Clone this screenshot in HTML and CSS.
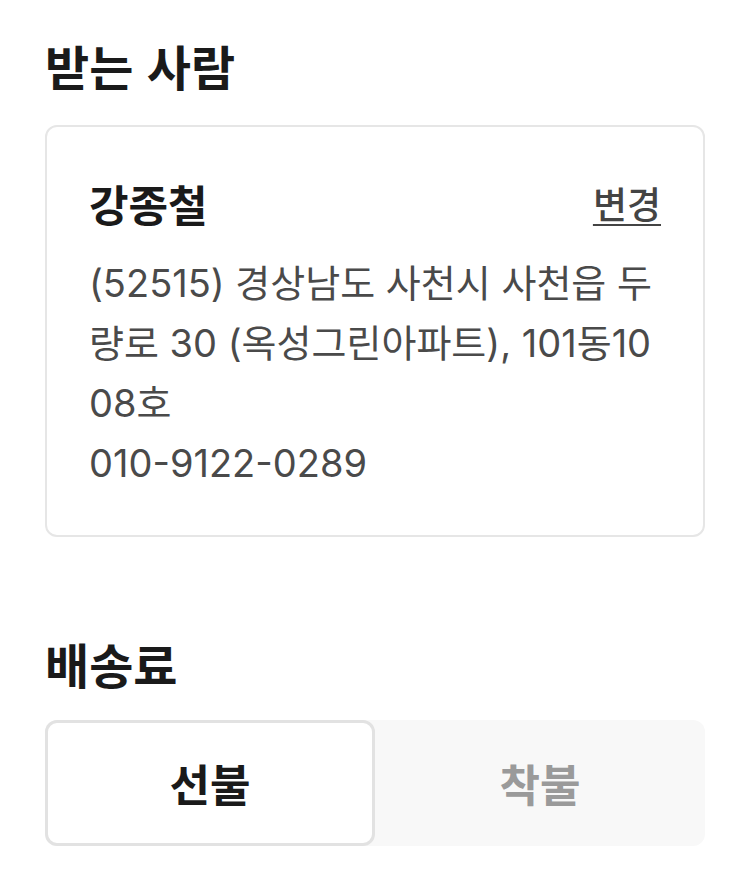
FILE: index.html
```html
<!DOCTYPE html>
<html lang="ko">
<head>
  <meta charset="UTF-8">
  <title>주문서</title>
  <link rel="stylesheet" href="styles.css">
</head>
<body>

<div class="main">
  <div class="h1">받는 사람</div>

  <div class="card">
    <div class="card-head">
      <span class="name">강종철</span>
      <a class="change" href="#">변경</a>
    </div>
    <div class="address">(52515) 경상남도 사천시 사천읍 두량로 30 (옥성그린아파트), 101동1008호</div>
    <div class="phone">010-9122-0289</div>
  </div>

  <div class="h1 h1-fee">배송료</div>

  <div class="segment">
    <div class="segment-item active">선불</div>
    <div class="segment-item">착불</div>
  </div>
</div>

</body>
</html>
```

FILE: styles.css
```css
body {
  margin: 0;
  background: #fff;
}
.main {
  font-family: "Noto Sans CJK KR", "Noto Sans", sans-serif;
  padding: 35px 45px 0 45px;
  color: #1a1a1a;
}

.h1 {
  font-size: 48px;
  font-weight: 700;
  line-height: 60px;
}
.h1-fee {
  margin-top: 96px;
}

.card {
  margin-top: 30px;
  border: 2px solid #e6e6e6;
  border-radius: 12px;
  padding: 48px 38px 42px 42px;
}
.card-head {
  display: flex;
  justify-content: space-between;
  align-items: center;
  line-height: 56px;
  margin-right: 4px;
}
.name {
  font-size: 43px;
  font-weight: 700;
}
.change {
  font-size: 37px;
  font-weight: 500;
  color: #444;
  text-decoration: underline;
  text-decoration-thickness: 2px;
  text-underline-offset: 5px;
}
.address,
.phone {
  font-family: "Inter", "Noto Sans CJK KR", sans-serif;
  font-size: 38px;
  line-height: 60px;
  color: #4a4a4a;
}
.address {
  margin-top: 22px;
  word-break: break-all;
}

.segment {
  margin-top: 27px;
  display: grid;
  grid-template-columns: 1fr 1fr;
  height: 126px;
  background: #f8f8f8;
  border-radius: 12px;
}
.segment-item {
  display: flex;
  align-items: center;
  justify-content: center;
  font-size: 44px;
  font-weight: 700;
  color: #9a9a9a;
  border-radius: 12px;
}
.segment-item.active {
  background: #fff;
  color: #1a1a1a;
  border: 3px solid #e2e2e2;
}
```
